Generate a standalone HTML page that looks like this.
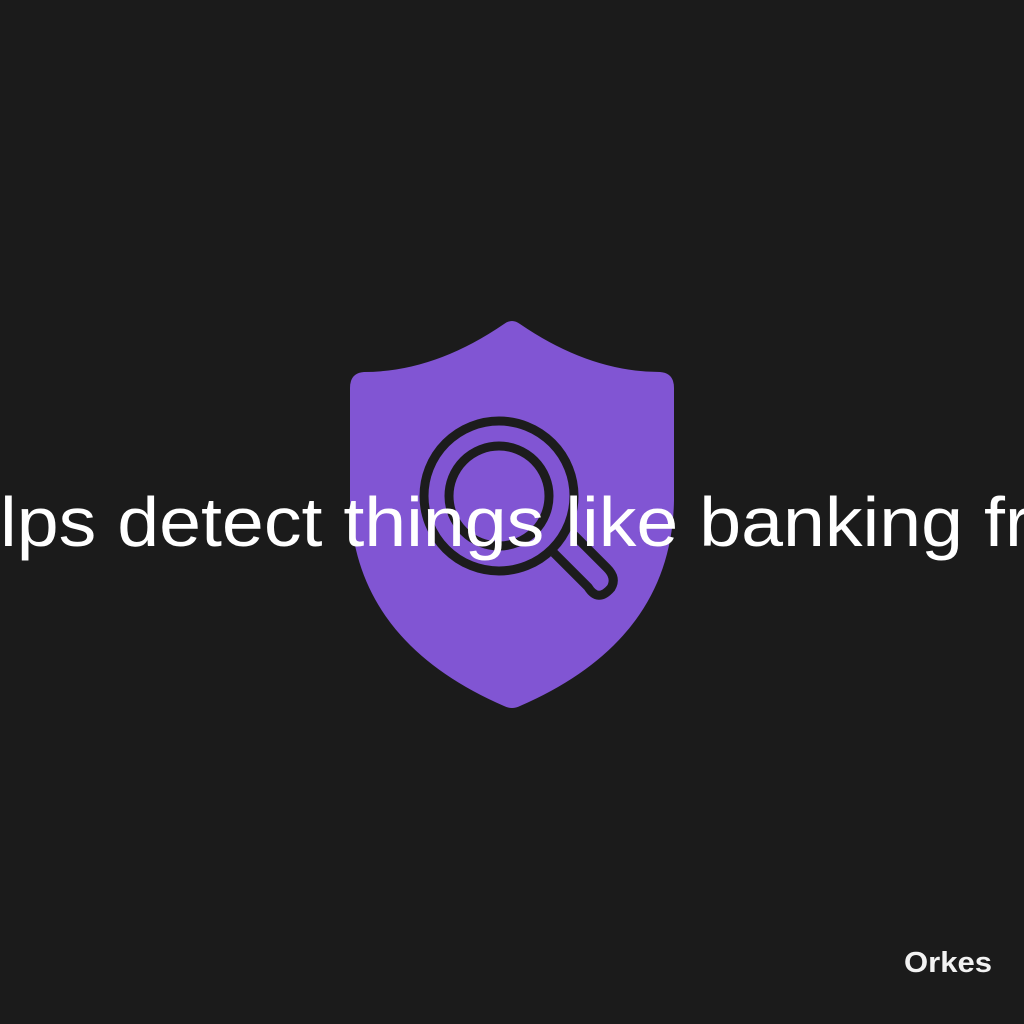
<!DOCTYPE html>
<html><head><style>
html,body{margin:0;padding:0;background:#1b1b1b;width:1024px;height:1024px;overflow:hidden}
</style></head><body>
<svg width="1024" height="1024" viewBox="0 0 1024 1024" xmlns="http://www.w3.org/2000/svg">
<rect width="1024" height="1024" fill="#1b1b1b"/>
<path d="M504 324 Q512 318 520 324 Q590 372 660 372 Q674 373 674 388 L674 500 Q672 640 520 706 Q512 710 504 706 Q352 640 350 500 L350 388 Q350 373 364 372 Q434 372 504 324 Z" fill="#8155d3"/>
<g fill="none" stroke="#1c1c1c" stroke-width="9" stroke-linejoin="round">
<circle cx="499" cy="496" r="75"/>
<circle cx="499" cy="496" r="50"/>
<path d="M554 553 L588 587 Q598 603 611 588 Q617 578 607 568 L574 535"/>
</g>
<text x="0" y="546" textLength="1030" lengthAdjust="spacingAndGlyphs" font-family="Liberation Sans, sans-serif" font-size="70" fill="#ffffff">lps detect things like banking fr</text>
<text x="904" y="972" font-family="Liberation Sans, sans-serif" font-size="29" font-weight="bold" fill="#f2f2f2" textLength="88" lengthAdjust="spacingAndGlyphs">Orkes</text>
</svg>
</body></html>
